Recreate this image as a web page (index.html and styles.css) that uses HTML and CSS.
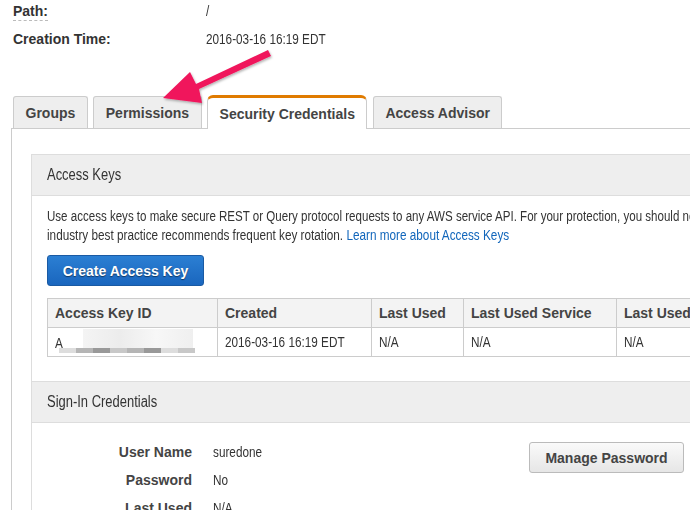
FILE: index.html
```html
<!DOCTYPE html>
<html>
<head>
<meta charset="utf-8">
<link rel="stylesheet" href="styles.css">
</head>
<body>
<div class="page">
  <div class="summary">
    <div class="srow"><span class="slabel"><span class="dotted">Path:</span></span><span class="sval nar">/</span></div>
    <div class="srow"><span class="slabel">Creation Time:</span><span class="sval nar">2016-03-16 16:19 EDT</span></div>
  </div>

  <div class="tabs">
    <div class="tab">Groups</div>
    <div class="tab">Permissions</div>
    <div class="tab active">Security Credentials</div>
    <div class="tab">Access Advisor</div>
  </div>

  <div class="panel">
    <div class="box">
      <div class="box-head"><span class="nar wide">Access Keys</span></div>
      <div class="box-body">
        <div class="desc">
          <div class="line"><span class="nar tight">Use access keys to make secure REST or Query protocol requests to any AWS service API. For your protection, you should never share your secret keys with anyone. In addition,</span></div>
          <div class="line"><span class="nar">industry best practice recommends frequent key rotation. <a href="#" class="link">Learn more about Access Keys</a></span></div>
        </div>
        <button class="btn-primary">Create Access Key</button>
        <table class="keys">
          <thead>
            <tr><th class="c1">Access Key ID</th><th class="c2">Created</th><th class="c3">Last Used</th><th class="c4">Last Used Service</th><th class="c5">Last Used Region</th></tr>
          </thead>
          <tbody>
            <tr>
              <td class="c1"><div class="keycell"><span class="keyA nar">A</span><span class="blur"><i class="b1"></i><i class="b2"></i><i class="b3"></i><i class="b4"></i><i class="b2"></i><i class="b3"></i><i class="b1"></i><i class="b4"></i></span></div></td>
              <td class="c2"><span class="nar">2016-03-16 16:19 EDT</span></td>
              <td class="c3"><span class="nar">N/A</span></td>
              <td class="c4"><span class="nar">N/A</span></td>
              <td class="c5"><span class="nar">N/A</span></td>
            </tr>
          </tbody>
        </table>
      </div>
      <div class="box-head second"><span class="nar wide">Sign-In Credentials</span></div>
      <div class="signin">
        <div class="fields">
          <div class="frow"><span class="flabel">User Name</span><span class="fval nar">suredone</span></div>
          <div class="frow"><span class="flabel">Password</span><span class="fval nar">No</span></div>
          <div class="frow"><span class="flabel">Last Used</span><span class="fval nar">N/A</span></div>
        </div>
        <button class="btn-default">Manage Password</button>
      </div>
    </div>
  </div>

  <svg class="arrow" width="140" height="80" viewBox="0 0 140 80">
    <defs>
      <filter id="sh" x="-20%" y="-20%" width="140%" height="140%">
        <feDropShadow dx="1" dy="1.5" stdDeviation="1.2" flood-color="#000" flood-opacity="0.3"/>
      </filter>
    </defs>
    <path filter="url(#sh)" fill="#f0155b" d="M116 5 L119 11 L47 44 L50 58 L11 53 L38 27 L44 39 Z"/>
  </svg>
</div>
</body>
</html>
```

FILE: styles.css
```css
* { box-sizing: border-box; }
html, body { margin: 0; padding: 0; background: #fff; }
body {
  width: 690px;
  height: 510px;
  overflow: hidden;
  font-family: "Liberation Sans", Arial, sans-serif;
  color: #333;
}
.page { position: relative; padding: 0 0 0 12px; }

/* condensed text (the reference uses a narrow Helvetica) */
.nar {
  display: inline-block;
  white-space: nowrap;
  transform: scaleX(0.84);
  transform-origin: 0 50%;
}
.nar.wide { transform: scaleX(0.81); }
.nar.tight { transform: scaleX(0.825); }

.summary { padding-left: 1px; }
.srow { display: flex; align-items: center; height: 22px; margin-bottom: 6px; font-size: 14px; }
.slabel {
  width: 193px;
  font-weight: bold;
  color: #333;
  font-size: 14px;
}
.dotted { border-bottom: 1px dashed #bbb; padding-bottom: 1px; }
.sval { font-size: 14px; color: #333; }

.tabs {
  display: flex;
  gap: 5.5px;
  margin-top: 45px;
  padding-left: 1px;
  height: 33px;
  align-items: flex-end;
  position: relative;
  z-index: 1;
}
.tab {
  height: 32px;
  padding: 0 11.5px;
  display: flex;
  align-items: center;
  border: 1px solid #ccc;
  border-bottom: none;
  border-radius: 3px 3px 0 0;
  background: #eee;
  font-weight: bold;
  font-size: 14px;
  color: #444;
}
.tab.active {
  background: #fff;
  height: 34px;
  border-top: 3px solid #e07b00;
  border-radius: 6px 6px 0 0;
  margin-bottom: -1px;
}

.panel {
  margin-left: -1px;
  border-left: 1px solid #ccc;
  border-top: 1px solid #ccc;
  padding: 25px 0 0 19px;
  height: 400px;
}
.box { border-left: 1px solid #ddd; border-top: 1px solid #ddd; }
.box-head {
  background: #eee;
  height: 41px;
  display: flex;
  align-items: center;
  padding-left: 15px;
  font-size: 16px;
  color: #333;
  border-bottom: 1px solid #ddd;
}
.box-head.second { border-top: 1px solid #ddd; height: 42px; }
.box-body { padding: 11px 0 24px 15px; }
.desc { font-size: 14px; line-height: 19px; color: #333; }
.line { height: 19px; white-space: nowrap; }
.link { color: #1166bb; text-decoration: none; }

.btn-primary {
  display: block;
  margin-top: 10px;
  width: 157px;
  height: 31px;
  border: 1px solid #1a5aa3;
  border-radius: 3px;
  background: linear-gradient(#2b7fd3, #1a66be);
  color: #fff;
  font-family: "Liberation Sans", Arial, sans-serif;
  font-weight: bold;
  font-size: 14px;
  text-shadow: 0 1px 1px rgba(0,0,0,0.5);
  padding: 0;
}

.keys {
  margin-top: 12px;
  border-collapse: collapse;
  font-size: 14px;
  table-layout: fixed;
  width: 740px;
}
.keys th, .keys td {
  border: 1px solid #ccc;
  text-align: left;
  padding: 0 7px;
  white-space: nowrap;
  overflow: hidden;
}
.keys th {
  height: 29px;
  background: #f3f3f3;
  font-weight: bold;
  color: #444;
  font-size: 14px;
}
.keys td { height: 29px; color: #333; }
.c1 { width: 170px; }
.c2 { width: 154px; }
.c3 { width: 92px; }
.c4 { width: 153px; }
.c5 { width: 171px; }

.keycell { position: relative; height: 27px; }
.keyA { position: absolute; left: 0; top: 6px; }
.blur { position: absolute; left: 4px; top: 19px; display: flex; }
.blur i { display: block; width: 17px; height: 5px; }
.blur .b1 { background: #ddd; }
.blur .b2 { background: #b5b5b5; }
.blur .b3 { background: #999; }
.blur .b4 { background: #c8c8c8; }
.keycell::before {
  content: "";
  position: absolute;
  left: 28px; top: 0; width: 110px; height: 19px;
  background: linear-gradient(90deg, #f4f4f4, #ececec, #f7f7f7, #efefef);
}

.signin { display: flex; align-items: flex-start; padding-top: 15px; }
.fields { width: 482px; }
.frow { display: flex; align-items: center; height: 28px; font-size: 14px; }
.flabel {
  width: 160px;
  text-align: right;
  font-weight: bold;
  color: #444;
  font-size: 14px;
}
.fval { margin-left: 21px; }

.btn-default {
  margin-top: 4px;
  margin-left: 15px;
  width: 155px;
  height: 31px;
  border: 1px solid #bbb;
  border-radius: 3px;
  background: linear-gradient(#fafafa, #e6e6e6);
  font-family: "Liberation Sans", Arial, sans-serif;
  font-weight: bold;
  font-size: 14px;
  color: #444;
  padding: 0;
}

.arrow { position: absolute; left: 152px; top: 45px; z-index: 5; }
```
